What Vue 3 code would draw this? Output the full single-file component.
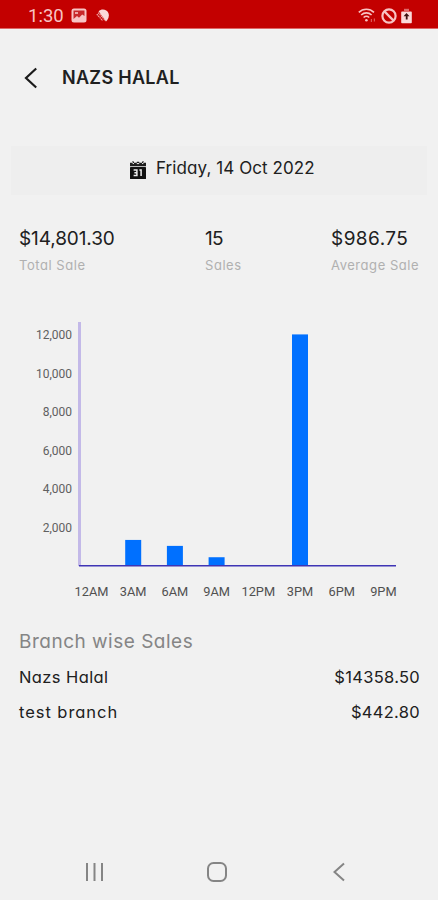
<template>
  <div class="screen">
    <div class="status-bar">
      <span class="clock">1:30</span>
      <svg class="status-photo" width="16" height="15" viewBox="0 0 16 15">
        <rect x="0.5" y="0.5" width="15" height="14" rx="2.5" fill="#f8c4c4" />
        <path d="M2.500 2.500h11v5.500l-2.300-1.600-3.200 3.400-2-1.800-3.500 3z" fill="#c8282a" />
        <path d="M4 5h3" stroke="#f8c4c4" stroke-width="1.600" />
      </svg>
      <svg class="status-app" width="15" height="14" viewBox="0 0 15 14">
        <path d="M3.600 2.200C6.600-.6 12 .3 13.400 4c1.200 3.300-.2 6.400-2.400 8.400z" fill="#fbdada" />
        <path d="M3.200 3.600l7.400 8.200M1.800 5.200l5.800 6.400" stroke="#f0a5a5" stroke-width="1.300" stroke-dasharray="1.500 0.600" />
      </svg>
      <div class="status-right">
        <svg width="19" height="16" viewBox="0 0 19 16" fill="none" stroke="#f8c4c4" stroke-width="1.600">
          <path d="M0.800 4.400c4.200-4.200 11-4.200 15.200 0" />
          <path d="M3.200 7c3-2.800 7.400-2.800 10.400 0" />
          <path d="M5.600 9.500c1.700-1.500 3.900-1.500 5.600 0" />
          <circle cx="8.400" cy="12.200" r="1.300" fill="#f8c4c4" stroke="none" />
          <path d="M13.400 11v3M16.400 10.500v3" stroke="#dc5a5a" stroke-width="1.200" />
        </svg>
        <svg width="16" height="16" viewBox="0 0 16 16" fill="none" stroke="#f8c4c4" stroke-width="2.200">
          <circle cx="8" cy="8" r="6.600" />
          <path d="M3.400 3.400l9.200 9.200" />
        </svg>
        <svg class="battery" width="11" height="16" viewBox="0 0 11 16">
          <path d="M1 3.400h9q.8 0 .8.800v10.200q0 .8-.8.800H1q-.8 0-.8-.8V4.200q0-.8.800-.8z" fill="#fbdada" />
          <path d="M3 0.800h5v2.600H3z" fill="#e06a6a" />
          <path d="M5.500 5l3 3.200H6.600v3.200H4.800V8.200H2.600z" fill="#3c1212" />
        </svg>
      </div>
    </div>

    <header class="header">
      <svg class="back" width="14" height="22" viewBox="0 0 14 22">
        <path d="M12.200 1.500L2 11l10.200 9.500" fill="none" stroke="#1b1b1b" stroke-width="2.200" />
      </svg>
      <h1 class="title">NAZS HALAL</h1>
    </header>

    <div class="date-bar">
      <svg class="calendar" width="16" height="18" viewBox="0 0 16 18">
        <path d="M0 1.800h2V.4h2v1.400h2.800V.8h2.400v1h2.800V.4h2v1.400h2v3.400H0z" fill="#1d1d1d" />
        <path d="M2 1.500l2 1.400M12 2.900l2-1.400M6.800 2.600h2.400" stroke="#eee" stroke-width="1" />
        <rect y="6" width="16" height="12" rx="0.600" fill="#111" />
        <path d="M3.600 9h3.300v5.400H3.600M4.400 11.700h2.500M9.400 9h1.700v6" fill="none" stroke="#eee" stroke-width="1.500" />
      </svg>
      <span class="date">Friday, 14 Oct 2022</span>
    </div>

    <div class="stats">
      <div v-for="stat in stats" :key="stat.label" class="stat">
        <div class="stat-value" :class="stat.size">{{ stat.value }}</div>
        <div class="stat-label">{{ stat.label }}</div>
      </div>
    </div>

    <svg class="chart" width="438" height="300" viewBox="0 0 438 300">
      <text v-for="tick in ticks" :key="tick" class="y-label" x="72" :y="yPos(tick) + 4.500">{{ tick.toLocaleString('en-US') }}</text>
      <rect x="78" y="12" width="3" height="244" fill="#c3b9e8" />
      <rect v-for="(hour, i) in hours" :key="hour.label" :x="xPos(i) - 8" :y="yPos(hour.sales)" width="16" :height="256 - yPos(hour.sales)" fill="#0070ff" />
      <rect x="79" y="255" width="317" height="1.500" fill="#3f35b5" />
      <text v-for="(hour, i) in hours" :key="hour.label" class="x-label" :x="xPos(i)" y="286">{{ hour.label }}</text>
    </svg>

    <section class="branches">
      <h2 class="branches-title">Branch wise Sales</h2>
      <div v-for="branch in branches" :key="branch.name" class="branch">
        <span :class="branch.nameClass">{{ branch.name }}</span>
        <span class="branch-total">{{ branch.total }}</span>
      </div>
    </section>

    <nav class="nav-bar">
      <svg width="20" height="20" viewBox="0 0 20 20">
        <path d="M2 1v18M9.500 1v18M17 1v18" stroke="#858585" stroke-width="2" />
      </svg>
      <svg class="home" width="22" height="22" viewBox="0 0 22 22">
        <rect x="2" y="2" width="18" height="18" rx="5.500" fill="none" stroke="#858585" stroke-width="2" />
      </svg>
      <svg width="14" height="20" viewBox="0 0 14 20">
        <path d="M12 1.500L2.500 10l9.500 8.500" fill="none" stroke="#858585" stroke-width="2" />
      </svg>
    </nav>
  </div>
</template>

<script setup>
const stats = [
  { value: '$14,801.30', label: 'Total Sale', size: 'total' },
  { value: '15', label: 'Sales', size: 'count' },
  { value: '$986.75', label: 'Average Sale', size: 'average' },
];

const ticks = [12000, 10000, 8000, 6000, 4000, 2000];

const hours = [
  { label: '12AM', sales: 0 },
  { label: '3AM', sales: 1330 },
  { label: '6AM', sales: 1020 },
  { label: '9AM', sales: 430 },
  { label: '12PM', sales: 0 },
  { label: '3PM', sales: 12020 },
  { label: '6PM', sales: 0 },
  { label: '9PM', sales: 0 },
];

const branches = [
  { name: 'Nazs Halal', total: '$14358.50', nameClass: 'name-main' },
  { name: 'test branch', total: '$442.80', nameClass: 'name-test' },
];

const xPos = (i) => 91.500 + i * 41.700;
const yPos = (value) => 255.500 - (value / 2000) * 38.450;
</script>

<style>
body {
  margin: 0;
  background: #f1f1f1;
}
</style>

<style scoped>
.screen {
  width: 438px;
  height: 900px;
  overflow: hidden;
  display: flex;
  flex-direction: column;
  background: #f1f1f1;
  font-family: Inter, 'Open Sans', sans-serif;
  font-feature-settings: 'cv11' 1;
  color: #202020;
}

.screen svg {
  display: block;
  flex-shrink: 0;
}

/* Status bar */
.status-bar {
  box-sizing: border-box;
  height: 29px;
  flex-shrink: 0;
  display: flex;
  align-items: center;
  padding: 3px 26px 0 28px;
  background: #c30000;
  border-bottom: 1px solid #d66;
}

.clock {
  width: 43px;
  font-family: Roboto, sans-serif;
  font-size: 18.500px;
  color: #f8c4c4;
}

.status-app {
  margin-left: 8px;
}

.status-right {
  display: flex;
  gap: 4px;
  margin-left: auto;
}

/* Header */
.header {
  display: flex;
  align-items: center;
  height: 98px;
  padding: 0 0 0 24px;
}

.title {
  margin: -2px 0 0 24px;
  font-size: 18px;
  font-weight: 600;
  letter-spacing: 0.300px;
  white-space: nowrap;
}

/* Date */
.date-bar {
  display: flex;
  align-items: center;
  height: 49px;
  flex-shrink: 0;
  margin: 19px 11px 0;
  padding-left: 119px;
  background: #eee;
}

.calendar {
  margin-top: -2px;
}

.date {
  margin: -5px 0 0 10px;
  font-size: 17px;
  letter-spacing: 0.080px;
  white-space: nowrap;
}

/* Totals */
.stats {
  display: grid;
  grid-template-columns: 186px 126px 1fr;
  margin: 31px 0 0 19px;
  white-space: nowrap;
}

.stat-value {
  font-size: 19px;
  line-height: 26px;
}

.total {
  letter-spacing: -0.100px;
}

.count {
  letter-spacing: -0.700px;
}

.average {
  letter-spacing: 0.450px;
}

.stat-label {
  font-size: 13px;
  line-height: 26px;
  letter-spacing: 0.550px;
  color: #b0b0b0;
}

/* Chart */
.chart {
  margin-top: 32px;
  font-family: Roboto, sans-serif;
}

.y-label {
  font-size: 12px;
  fill: #606060;
  text-anchor: end;
}

.x-label {
  font-size: 12.800px;
  fill: #505050;
  text-anchor: middle;
}

/* Branches */
.branches {
  padding: 18px 18px 0 19px;
}

.branches-title {
  margin: 0 0 4px;
  font-size: 19px;
  font-weight: 400;
  line-height: 28px;
  letter-spacing: 0.500px;
  color: #858585;
}

.branch {
  display: flex;
  justify-content: space-between;
  font-size: 16.500px;
  line-height: 35px;
}

.name-main {
  letter-spacing: 0.400px;
}

.name-test {
  letter-spacing: 0.950px;
}

.branch-total {
  letter-spacing: 0.300px;
}

/* Android navigation */
.nav-bar {
  display: flex;
  align-items: center;
  justify-content: space-between;
  margin-top: auto;
  padding: 0 92px 17px 85px;
}

.home {
  margin-right: 4px;
}
</style>
